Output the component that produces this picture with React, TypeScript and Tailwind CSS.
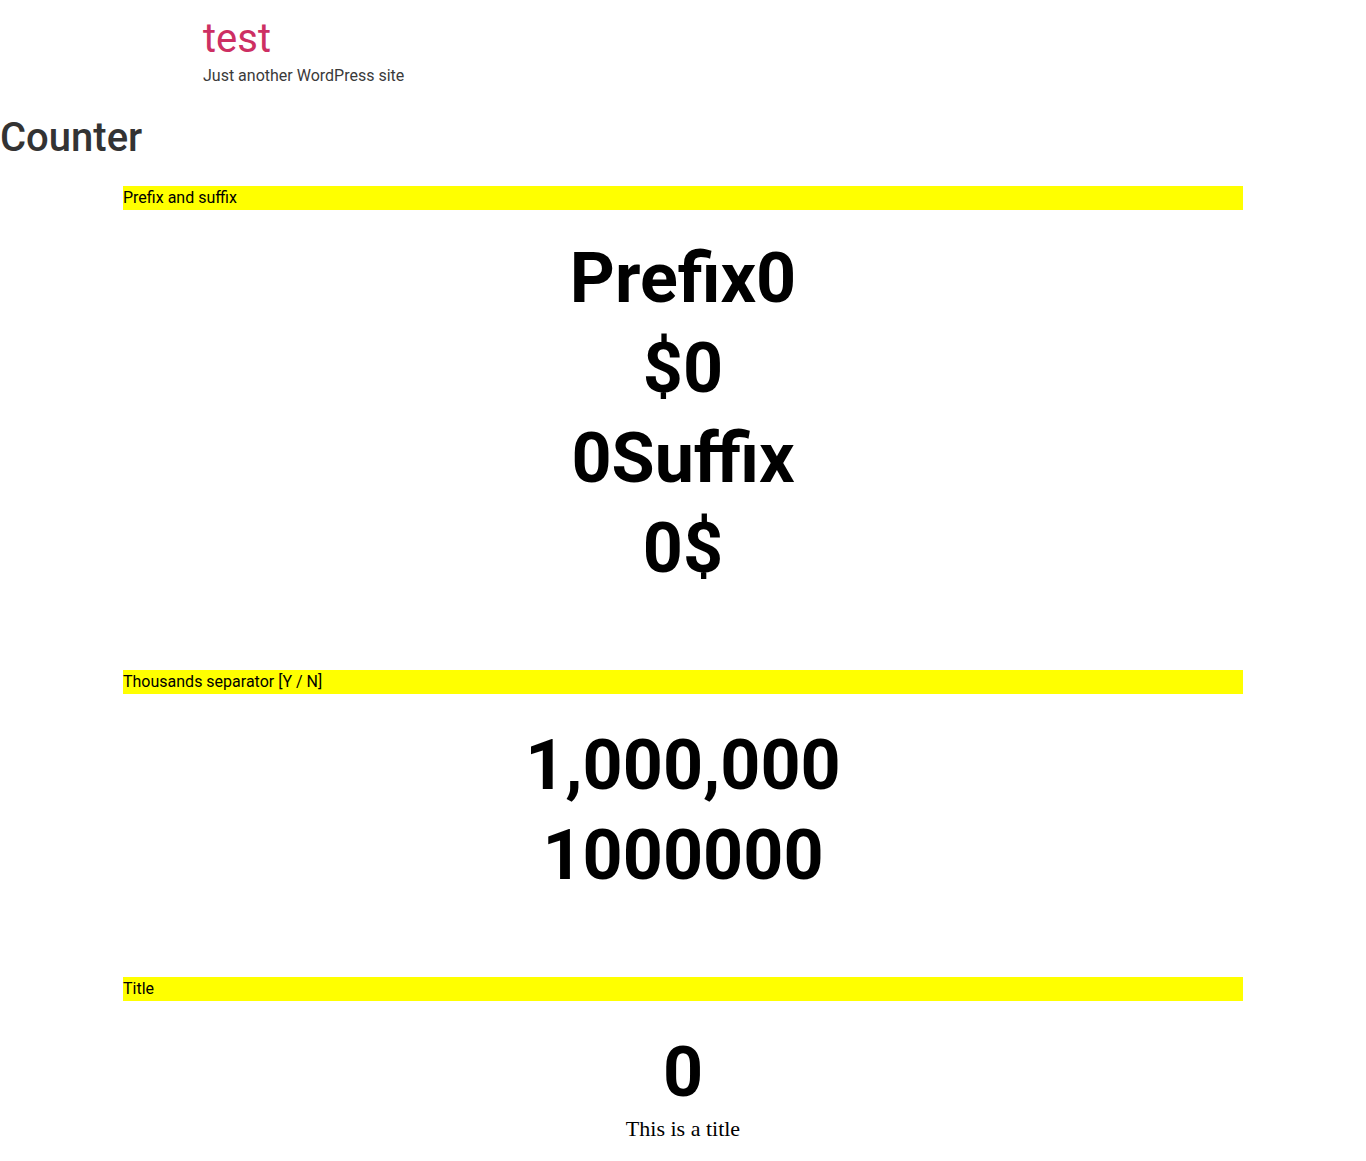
export default function App() {
  const big = "text-[70px] leading-[90px] font-bold text-black text-center";
  const bar = "bg-[#ffff00] h-[24px] text-[16px] leading-[24px] text-black";
  return (
    <div className="bg-white min-h-[1161px] font-['Roboto',sans-serif]">
      <header className="w-[960px] mx-auto pt-[15px]">
        <div className="text-[40px] leading-[48px] text-[#cd2f63]">test</div>
        <div className="text-[16px] leading-[24px] text-[#3a3a3a] mt-[1px]">Just another WordPress site</div>
      </header>
      <h1 className="text-[40px] leading-[48px] font-medium text-[#333333] mt-[26px]">Counter</h1>
      <main className="w-[1120px] mx-auto mt-[24px]">
        <section>
          <div className={bar}>Prefix and suffix</div>
          <div className="mt-[23px]">
            <div className={big}>Prefix0</div>
            <div className={big}>$0</div>
            <div className={big}>0Suffix</div>
            <div className={big}>0$</div>
          </div>
        </section>
        <section className="mt-[77px]">
          <div className={bar}>Thousands separator [Y / N]</div>
          <div className="mt-[26px]">
            <div className={big}>1,000,000</div>
            <div className={big}>1000000</div>
          </div>
        </section>
        <section className="mt-[77px]">
          <div className={bar}>Title</div>
          <div className="mt-[26px]">
            <div className={big}>0</div>
            <div className="text-[22px] leading-[24px] text-center text-black font-['Liberation_Serif',serif]">This is a title</div>
          </div>
        </section>
      </main>
    </div>
  );
}
